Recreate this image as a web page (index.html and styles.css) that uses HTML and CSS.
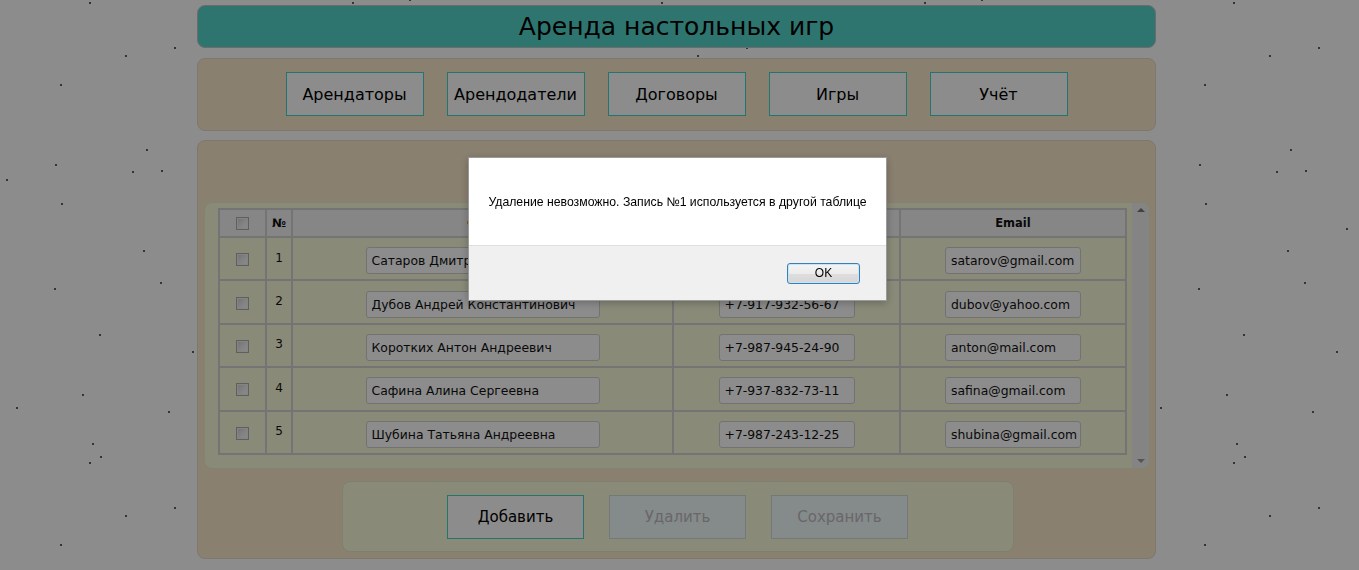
FILE: index.html
```html
<!DOCTYPE html>
<html lang="ru">
<head>
<meta charset="utf-8">
<title>Аренда настольных игр</title>
<link rel="stylesheet" href="styles.css">
</head>
<body>
<div class="page">
  <header class="title-bar"><h1 class="title">Аренда настольных игр</h1></header>

  <nav class="nav-panel">
    <button class="nav-btn">Арендаторы</button>
    <button class="nav-btn">Арендодатели</button>
    <button class="nav-btn">Договоры</button>
    <button class="nav-btn">Игры</button>
    <button class="nav-btn">Учёт</button>
  </nav>

  <main class="content-panel">
    <div class="table-box">
      <div class="table-scroll">
        <table class="data-table">
          <thead>
            <tr>
              <th class="col-check"><input type="checkbox" class="cb"></th>
              <th class="col-num">№</th>
              <th class="col-name">ФИО</th>
              <th class="col-phone">Телефон</th>
              <th class="col-email">Email</th>
            </tr>
          </thead>
          <tbody>
            <tr>
              <td><input type="checkbox" class="cb"></td>
              <td class="num">1</td>
              <td><input class="field field-name" type="text" value="Сатаров Дмитрий Александрович"></td>
              <td><input class="field field-short" type="text" value="+7-917-123-45-67"></td>
              <td><input class="field field-short" type="text" value="satarov@gmail.com"></td>
            </tr>
            <tr>
              <td><input type="checkbox" class="cb"></td>
              <td class="num">2</td>
              <td><input class="field field-name" type="text" value="Дубов Андрей Константинович"></td>
              <td><input class="field field-short" type="text" value="+7-917-932-56-67"></td>
              <td><input class="field field-short" type="text" value="dubov@yahoo.com"></td>
            </tr>
            <tr>
              <td><input type="checkbox" class="cb"></td>
              <td class="num">3</td>
              <td><input class="field field-name" type="text" value="Коротких Антон Андреевич"></td>
              <td><input class="field field-short" type="text" value="+7-987-945-24-90"></td>
              <td><input class="field field-short" type="text" value="anton@mail.com"></td>
            </tr>
            <tr>
              <td><input type="checkbox" class="cb"></td>
              <td class="num">4</td>
              <td><input class="field field-name" type="text" value="Сафина Алина Сергеевна"></td>
              <td><input class="field field-short" type="text" value="+7-937-832-73-11"></td>
              <td><input class="field field-short" type="text" value="safina@gmail.com"></td>
            </tr>
            <tr>
              <td><input type="checkbox" class="cb"></td>
              <td class="num">5</td>
              <td><input class="field field-name" type="text" value="Шубина Татьяна Андреевна"></td>
              <td><input class="field field-short" type="text" value="+7-987-243-12-25"></td>
              <td><input class="field field-short" type="text" value="shubina@gmail.com"></td>
            </tr>
          </tbody>
        </table>
      </div>
      <div class="scrollbar">
        <span class="arrow arrow-up"></span>
        <span class="arrow arrow-down"></span>
      </div>
    </div>

    <div class="actions">
      <button class="act-btn">Добавить</button>
      <button class="act-btn is-disabled">Удалить</button>
      <button class="act-btn is-disabled">Сохранить</button>
    </div>
  </main>
</div>

<div class="backdrop">
  <div class="dialog">
    <div class="dialog-body">Удаление невозможно. Запись №1 используется в другой таблице</div>
    <div class="dialog-footer"><button class="ok-btn">OK</button></div>
  </div>
</div>
</body>
</html>
```

FILE: styles.css
```css
* { box-sizing: border-box; }

html, body { height: 100%; }

body {
  margin: 0;
  padding: 5px 6px 0 0;
  font-family: "DejaVu Sans", sans-serif;
  color: #111;
  background-color: #ffffff;
  background-image: url("data:image/svg+xml,%3Csvg xmlns='http://www.w3.org/2000/svg' width='572' height='460'%3E%3Cg fill='rgb(95,95,95)'%3E%3Crect x='89' y='2' width='2' height='2'/%3E%3Crect x='174' y='47' width='2' height='2'/%3E%3Crect x='125' y='55' width='2' height='2'/%3E%3Crect x='60' y='84' width='2' height='2'/%3E%3Crect x='146' y='149' width='2' height='2'/%3E%3Crect x='55' y='164' width='2' height='2'/%3E%3Crect x='132' y='171' width='2' height='2'/%3E%3Crect x='161' y='170' width='2' height='2'/%3E%3Crect x='6' y='179' width='2' height='2'/%3E%3Crect x='61' y='203' width='2' height='2'/%3E%3Crect x='202' y='228' width='2' height='2'/%3E%3Crect x='143' y='250' width='2' height='2'/%3E%3Crect x='160' y='282' width='2' height='2'/%3E%3Crect x='54' y='288' width='2' height='2'/%3E%3Crect x='99' y='334' width='2' height='2'/%3E%3Crect x='192' y='351' width='2' height='2'/%3E%3Crect x='82' y='394' width='2' height='2'/%3E%3Crect x='16' y='407' width='2' height='2'/%3E%3Crect x='168' y='411' width='2' height='2'/%3E%3Crect x='92' y='443' width='2' height='2'/%3E%3Crect x='100' y='456' width='2' height='2'/%3E%3Crect x='352' y='2' width='2' height='2'/%3E%3Crect x='409' y='0' width='2' height='1'/%3E%3C/g%3E%3C/svg%3E");
  background-repeat: repeat;
}

.page {
  width: 959px;
  margin: 0 auto;
  display: flex;
  flex-direction: column;
}

/* ---------- title ---------- */
.title-bar {
  height: 43px;
  border: 1px solid #c4c4c4;
  border-radius: 8px;
  background: #55d6cc;
  display: flex;
  align-items: center;
  justify-content: center;
}

.title {
  margin: 0;
  font-size: 25px;
  font-weight: normal;
  color: #000;
  line-height: 1;
}

/* ---------- navigation ---------- */
.nav-panel {
  margin-top: 10px;
  height: 73px;
  padding-top: 13px;
  border: 1px solid #e3dac8;
  border-radius: 8px;
  background: #fbe9cc;
  display: flex;
  justify-content: center;
  align-items: flex-start;
  gap: 23px;
}

.nav-btn {
  width: 138px;
  height: 44px;
  border: 1px solid #40d8cc;
  background: #ffffff;
  font-family: inherit;
  font-size: 16px;
  color: #000;
  padding: 0;
}

/* ---------- content ---------- */
.content-panel {
  margin-top: 9px;
  height: 419px;
  padding: 61px 5px 6px 6px;
  border: 1px solid #e3dac8;
  border-radius: 8px;
  background: #fbe9cc;
  display: flex;
  flex-direction: column;
}

.table-box {
  height: 267px;
  border: 1px solid #ecedd0;
  border-radius: 8px;
  background: #f9fbda;
  display: flex;
  overflow: hidden;
}

.table-scroll {
  flex: 1;
  padding: 5px 0 0 13px;
}

.scrollbar {
  width: 17px;
  background: #f1f1f1;
  display: flex;
  flex-direction: column;
  justify-content: space-between;
  align-items: center;
  padding: 5px 0 5px;
}

.arrow {
  width: 0;
  height: 0;
  border-left: 4px solid transparent;
  border-right: 4px solid transparent;
}

.arrow-up { border-bottom: 4px solid #777; }
.arrow-down { border-top: 4px solid #9a9a9a; }

.data-table {
  width: 909px;
  table-layout: fixed;
  border-collapse: collapse;
  border: 2px solid #d3d3d3;
}

.data-table th,
.data-table td {
  border: 2px solid #d3d3d3;
  padding: 0;
  text-align: center;
  vertical-align: middle;
}

.data-table th {
  height: 28px;
  background: #f4f4f4;
  font-size: 11.5px;
  font-weight: bold;
}

.data-table td {
  height: 43.4px;
  font-size: 12px;
}

.col-check { width: 47px; }
.col-num { width: 26px; }
.col-name { width: 381px; }
.col-phone { width: 227px; }

.num { padding-bottom: 2px !important; }

.cb {
  -webkit-appearance: none;
  appearance: none;
  display: inline-block;
  width: 13px;
  height: 13px;
  margin: 2px 0 0;
  vertical-align: middle;
  border: 1px solid #adadad;
  box-shadow: inset 0 0 0 1px #f0f0f0;
  background: linear-gradient(135deg, #cfcfcf 0%, #eeeeee 55%, #ffffff 100%);
}

thead .cb { margin-top: 0; }

.field {
  height: 27px;
  margin-top: 4px;
  padding: 0 0 0 5px;
  border: 1px solid #d0d0d0;
  border-radius: 3px;
  background: #ffffff;
  font-family: inherit;
  font-size: 12.4px;
  color: #111;
}

.field-name { width: 234px; }
.field-short { width: 136px; }

/* ---------- actions ---------- */
.actions {
  align-self: center;
  margin: 12px 0 0 1px;
  width: 672px;
  height: 71px;
  padding-top: 13px;
  border: 1px solid #e6e7cc;
  border-radius: 8px;
  background: #f9fbda;
  display: flex;
  justify-content: center;
  align-items: flex-start;
  gap: 25px;
}

.act-btn {
  width: 137px;
  height: 44px;
  padding: 0;
  border: 1px solid #40d8cc;
  background: #ffffff;
  font-family: inherit;
  font-size: 15px;
  color: #000;
}

.act-btn.is-disabled {
  background: #f3fcfc;
  border-color: #d2dcdc;
  color: #bdbdbd;
}

/* ---------- modal ---------- */
.backdrop {
  position: fixed;
  inset: 0;
  background: rgba(0, 0, 0, 0.45);
  display: flex;
  justify-content: center;
  align-items: flex-start;
  padding: 157px 4px 0 0;
}

.dialog {
  width: 419px;
  border: 1px solid #9a9a9a;
  background: #ffffff;
  box-shadow: 0 2px 8px rgba(0, 0, 0, 0.25);
  font-family: "Liberation Sans", Arial, sans-serif;
  font-size: 12.25px;
  color: #000;
}

.dialog-body {
  height: 87px;
  display: flex;
  align-items: center;
  justify-content: center;
  padding-top: 1px;
}

.dialog-footer {
  height: 55px;
  border-top: 1px solid #dfdfdf;
  background: #f0f0f0;
  display: flex;
  align-items: center;
  justify-content: flex-end;
  padding-right: 26px;
}

.ok-btn {
  width: 73px;
  height: 21px;
  padding: 0;
  border: 1px solid #3c7fb1;
  border-radius: 3px;
  box-shadow: inset 0 0 0 1px #c3e6fb;
  background: linear-gradient(#f4f4f4 0%, #ececec 50%, #dedede 51%, #d6d6d6 100%);
  font-family: "Liberation Sans", Arial, sans-serif;
  font-size: 12px;
  color: #000;
}
```
